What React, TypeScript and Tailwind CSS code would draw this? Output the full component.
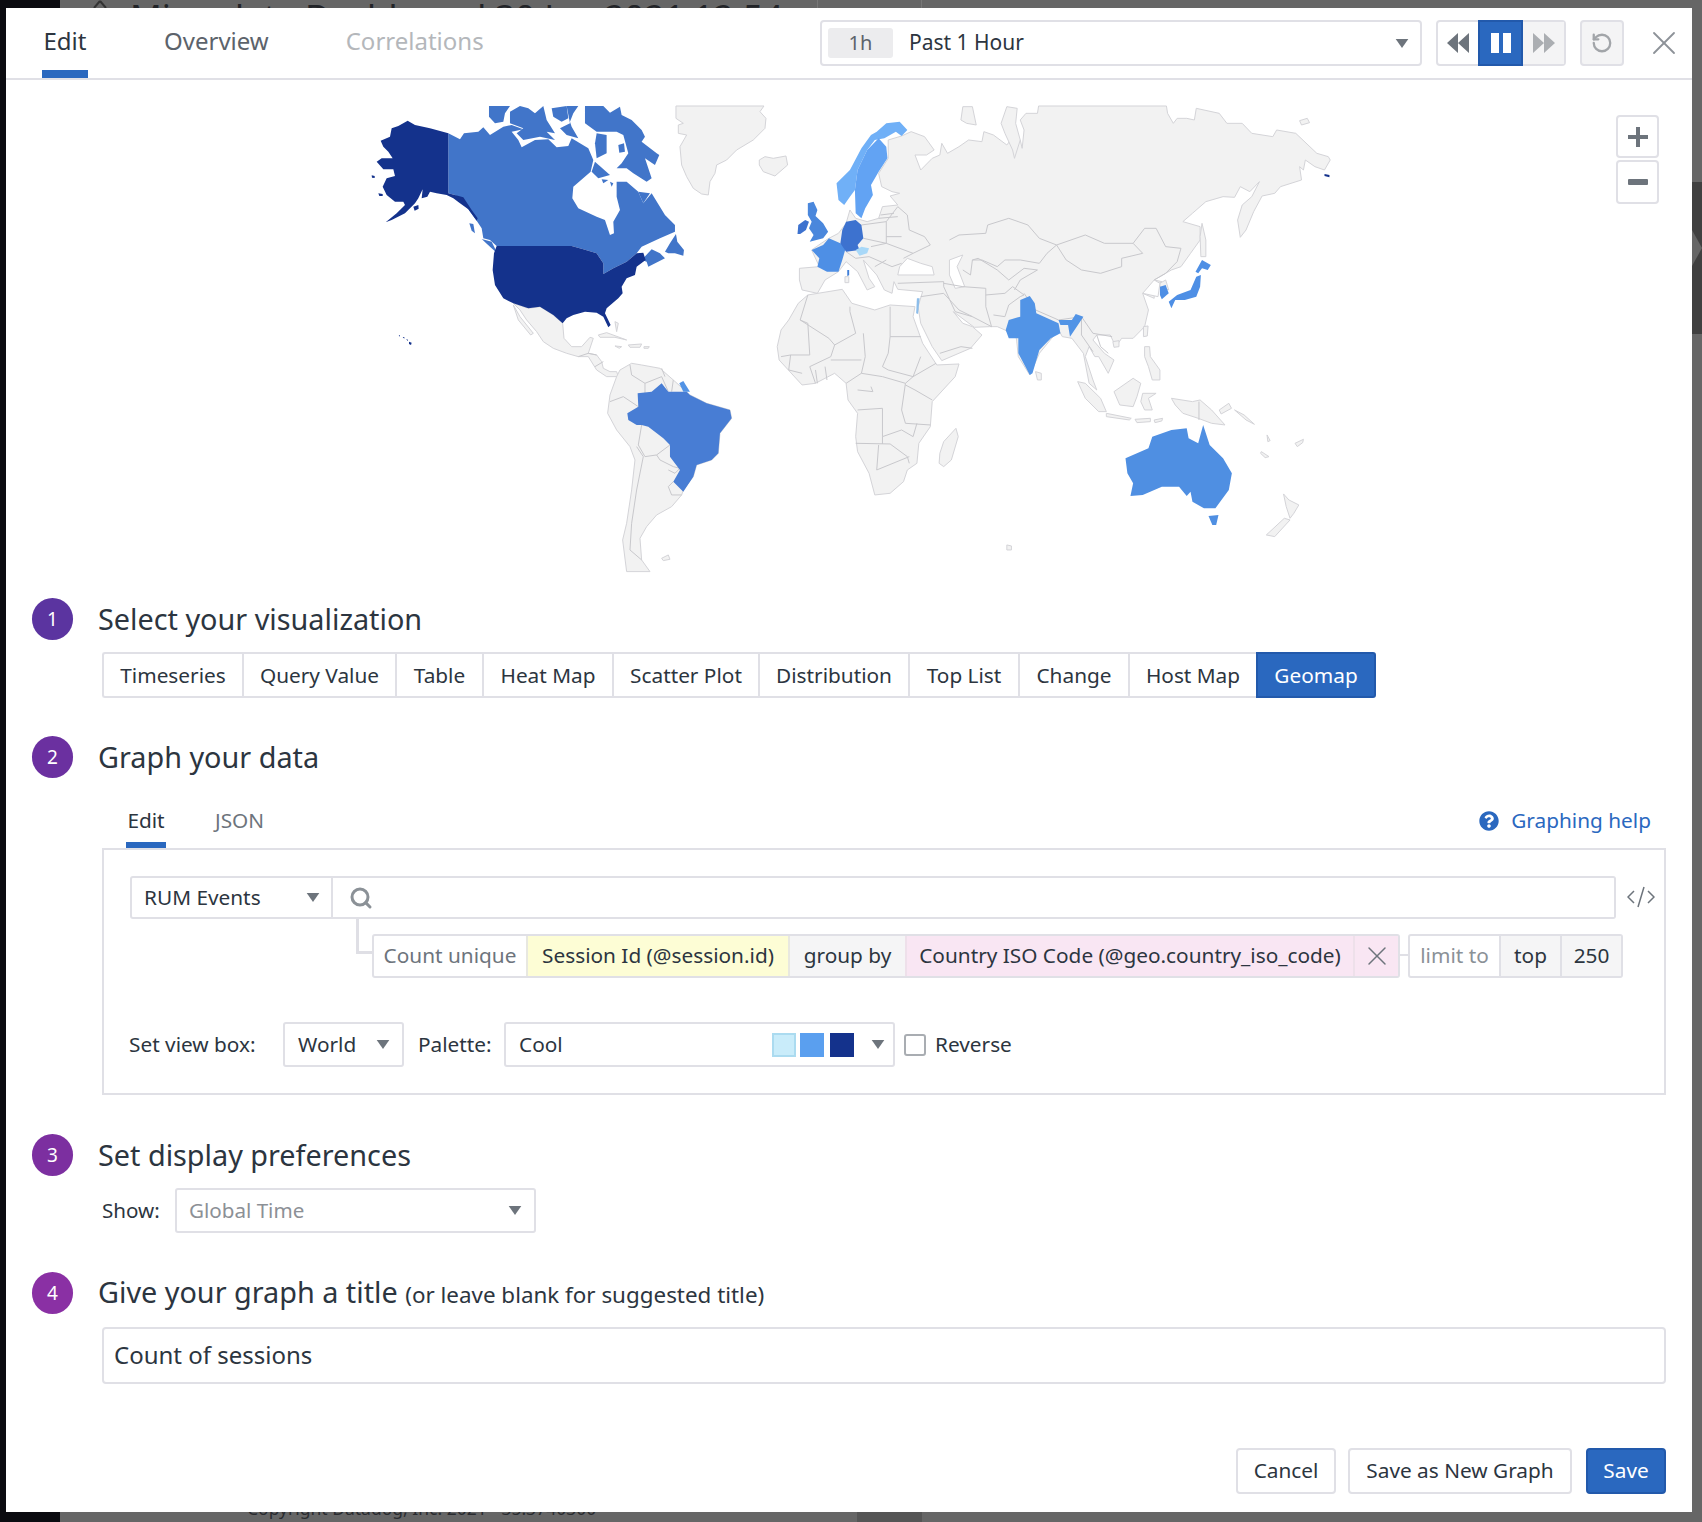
import { Search, RotateCcw, X } from 'lucide-react';
import { FaQuestionCircle } from 'react-icons/fa';

const LAND = '#f2f2f2';
const EDGE = '#d4d4d8';
const BORDER = '#c8c8cc';

// traced from the left half of the map
const americasGray = [
  '1008,48 1272,48 1260,65 1278,85 1275,115 1240,150 1190,180 1160,210 1130,225 1125,250 1110,275 1105,315 1085,312 1060,295 1040,260 1025,225 1020,170 1040,135 1015,130 1015,105 1030,100 1008,85',
  '1258,210 1275,200 1300,205 1338,198 1343,225 1305,258 1270,245 1258,225',
  '520,640 565,655 600,650 640,675 668,700 672,745 695,770 725,770 750,742 760,745 745,790 770,795 785,815 790,835 810,845 830,845 835,860 800,860 770,840 745,800 715,800 680,790 640,775 610,755 590,725 560,690 540,660',
  '520,645 540,680 580,730 572,735 535,690',
  '830,860 840,840 875,820 905,825 960,835 1000,870 1050,915 1100,940 1170,960 1175,985 1140,1030 1135,1090 1115,1110 1070,1125 1060,1160 1030,1200 1025,1215 995,1250 950,1275 920,1310 900,1345 905,1410 930,1445 860,1445 848,1350 860,1300 875,1200 885,1110 870,1070 830,1020 803,970 810,915',
  '775,735 800,728 860,750 825,742 780,742',
  '865,765 905,762 900,772 870,772',
  '825,768 845,770 838,775',
  '912,770 928,770 925,775 912,775',
  '825,695 835,700 830,725',
  '965,1405 985,1395 990,1408 970,1412',
];

const americasBorders = [
  '870,825 875,855 915,880 915,910',
  '915,880 965,860 985,905',
  '965,835 975,860',
  '1000,870 995,905',
  '810,935 850,920 895,950',
  '905,1005 895,1065 915,1100',
  '890,1070 910,1100 890,1200 875,1300 870,1380 905,1410',
  '915,1100 950,1095 990,1065',
  '950,1095 960,1110 1000,1130 1020,1135 1005,1150 985,1140',
  '1000,1175 985,1190 995,1215 1025,1215',
  '715,800 745,790 770,795',
  '765,830 790,815',
];

const canada = [
  '325,130 360,148 372,130 415,125 430,112 450,135 490,110 515,105 550,118 515,125 535,150 545,172 585,150 625,148 650,172 685,168 695,145 745,175 760,210 752,245 700,290 697,325 715,355 770,380 795,390 810,435 822,430 820,395 840,360 830,320 830,275 860,275 895,305 910,340 935,310 975,375 1005,405 1005,425 960,445 905,470 890,490 860,515 820,535 790,552 790,520 770,490 730,478 695,468 470,468 450,450 430,445 425,415 410,392 385,358 360,325 345,315 325,310',
  '975,485 990,460 1008,432 1012,455 1032,480 1030,497 1005,490 985,490',
  '905,510 935,478 960,490 975,505 925,530 920,515',
  '388,400 400,402 405,430 395,422',
  '425,447 455,455 472,490 450,470',
  '447,48 510,48 495,70 490,95 465,100 447,80',
  '510,65 540,48 565,55 585,70 610,48 620,90 645,130 620,125 645,150 600,140 550,150 530,130 550,115 510,100',
  '635,55 680,48 685,85 665,95 640,80',
  '680,48 715,48 700,70 690,95 695,110 715,145 680,135 660,115 690,100',
  '735,48 790,48 810,68 840,50 845,75 875,90 905,120 915,140 905,155 950,190 958,195 945,225 915,205 925,235 935,265 920,275 880,250 860,235 830,235 845,220 865,190 850,135 830,125 770,125 735,100',
  '770,130 800,135 800,190 770,205 765,160',
  '765,215 810,255 775,265 755,245',
  '785,268 805,270 790,280',
  '810,275 820,280 815,290',
  '835,165 852,160 855,185 838,188',
  '895,305 930,310 910,340',
];

const usa = [
  '470,468 695,468 730,478 770,490 790,520 790,552 820,535 860,515 890,490 910,488 917,510 890,530 885,555 860,565 845,590 848,610 835,625 800,655 795,670 812,705 805,712 790,680 770,668 735,665 700,675 680,685 668,700 640,675 600,650 565,655 520,640 490,625 465,585 458,540 462,490',
  '122,152 150,140 155,115 175,108 203,92 225,105 270,115 325,130 325,310 345,315 370,322 395,360 413,385 410,392 385,358 360,340 340,325 320,315 290,310 270,305 262,320 245,325 248,298 235,325 225,340 195,370 155,390 137,397 170,370 195,345 190,335 165,335 140,315 128,290 140,265 165,258 160,238 130,238 110,215 125,205 158,205 145,185 130,170',
  '95,256 104,258 104,264 96,263',
  '115,310 128,312 128,318 118,318',
  '220,350 235,345 236,356 224,362',
  '176,736 180,736 180,740',
  '188,741 193,741 193,746',
  '198,748 204,749 204,753',
  '207,755 215,758 213,765 207,762',
];

const brazil = '893,910 935,905 965,880 985,905 1040,905 1050,915 1100,940 1170,960 1175,985 1140,1030 1135,1090 1115,1110 1070,1125 1060,1160 1030,1205 1000,1175 1020,1140 990,1100 990,1065 970,1045 925,1010 905,1005 890,1005 865,990 862,970 895,950';

// traced from the right half of the map
const eurasiaGray = [
  '370,138 395,125 430,140 455,180 435,195 405,195 420,240 450,205 470,195 475,160 490,190 520,170 545,150 580,155 585,125 610,135 645,165 655,150 680,150 685,175 690,120 680,90 695,70 725,70 728,48 1062,48 1065,70 1080,100 1090,85 1115,85 1135,90 1140,55 1200,70 1220,100 1260,100 1285,130 1340,140 1350,120 1400,130 1455,190 1485,200 1490,210 1475,240 1450,230 1425,210 1420,240 1410,230 1415,270 1360,290 1345,310 1312,318 1290,365 1270,420 1255,442 1248,390 1260,345 1285,320 1305,275 1280,305 1255,290 1240,322 1210,320 1165,335 1130,370 1105,395 1150,410 1150,450 1125,490 1100,530 1075,540 1030,570 1050,575 1030,590 1030,625 1000,610 1015,660 1005,710 975,745 945,745 930,770 915,735 880,735 870,750 900,790 925,810 910,850 885,800 875,800 860,770 850,800 870,870 880,900 860,880 845,790 815,745 790,740 780,720 730,790 705,855 675,800 670,745 640,720 620,710 600,710 560,712 505,665 530,700 555,710 580,735 550,775 475,812 450,770 420,700 413,650 425,605 360,598 350,575 345,610 325,600 305,555 270,510 285,565 300,590 280,600 255,545 225,515 205,545 170,570 150,610 110,600 103,570 103,535 155,530 135,480 160,460 180,445 205,430 225,400 235,360 250,385 280,395 310,385 320,350 360,345 340,318 365,310 345,305 318,290 310,250 335,205 335,150',
  '100,640 125,615 215,598 240,640 300,660 340,645 405,650 400,680 425,760 462,825 520,822 510,860 450,935 445,1010 415,1060 410,1120 385,1140 375,1175 340,1210 300,1215 285,1150 255,1085 250,1040 255,970 230,930 225,880 195,850 145,880 110,885 50,810 45,770 55,720 75,690',
  '470,1090 480,1055 512,1015 518,1040 500,1110 480,1130 468,1120',
  '645,50 672,55 668,100 680,150 665,205 660,180 640,130 630,100',
  '525,90 530,50 555,50 565,105 540,100',
  '1410,92 1430,85 1436,98 1415,105',
  '1155,400 1165,450 1165,500 1152,500 1150,440',
  '720,845 735,850 735,870 725,870',
  '1002,710 1014,708 1012,738 1002,740',
  '922,755 938,752 938,770 925,772',
  '1005,770 1018,770 1020,800 1045,840 1045,870 1025,870 1015,830 1005,800',
  '925,905 975,865 995,880 985,920 975,950 940,945',
  '1000,910 1035,910 1015,925 1025,960 1005,960 995,935',
  '830,875 850,880 890,925 905,965 885,965 850,925',
  '905,970 970,985 965,990 905,980',
  '980,988 1020,985 1020,995 985,998',
  '1030,990 1052,985 1050,993 1032,998',
  '1075,925 1130,935 1150,930 1180,960 1215,1005 1180,1000 1145,985 1105,970 1085,945',
  '1200,960 1225,940 1232,955 1205,972',
  '1240,960 1265,975 1292,1003 1270,990',
  '1325,1035 1333,1052 1327,1055',
  '1398,1060 1420,1048 1418,1058 1404,1070',
  '1310,1085 1330,1100 1320,1103 1308,1090',
  '1368,1212 1382,1230 1408,1245 1395,1270 1385,1285 1375,1250',
  '1323,1335 1370,1285 1385,1290 1345,1340',
  '645,1365 657,1368 657,1380 645,1380',
  '222,560 232,560 232,578 222,578',
  '1045,580 1060,570 1068,600 1045,590',
];

const eurasiaHoles = [
  '365,530 385,505 420,520 450,530 455,555 360,555',
  '495,510 530,495 515,530 535,590 510,595 495,555',
  '1000,610 1030,570 1045,580 1040,620',
];

const eurasiaBorders = [
  '125,615 105,690 125,700 130,795 80,795',
  '105,690 180,745 195,765 250,730',
  '235,650 235,665 250,730',
  '340,650 340,740 420,740',
  '270,730 275,800 265,850',
  '340,740 335,790 320,830 335,840',
  '195,765 185,800 130,830 145,880',
  '185,810 265,810',
  '225,880 265,850 320,860 380,880 400,860 420,800',
  '380,880 370,960 380,1000 445,1005',
  '255,960 320,955 320,1040 370,1020 400,1040 410,1000',
  '250,1060 340,1062 385,1100 390,1120',
  '310,1065 305,1140 390,1100',
  '450,930 405,900 380,885',
  '335,840 400,860 460,820',
  '255,900 295,905 290,890',
  '320,1040 320,1062',
  '55,800 80,795 75,840 110,850',
  '145,840 150,880',
  '170,830 175,870',
  '775,465 850,435 900,460 975,460 1000,490 945,505 945,530 890,550 840,540 800,510 775,465',
  '975,460 1005,415 1035,415 1060,470 1100,475 1090,515 1060,550 1030,570',
  '495,450 520,435 590,430 595,405 650,385 700,405 730,445 775,465 750,490 730,520 680,510 640,510 620,530 580,510 555,510 550,555 530,540',
  '555,510 570,505 620,540 650,570 690,535 725,540 680,570 665,600',
  '480,580 530,590 590,595 590,650 605,710 555,680 510,665 480,590',
  '590,615 640,610 660,590 690,615 680,620 650,645 640,680 610,675',
  '690,610 720,660 780,690 840,680 870,730 920,740',
  '840,680 840,735 870,785',
  '880,735 890,770 910,790',
  '360,580 480,575 480,590',
  '420,620 480,610 520,660 555,680',
  '470,790 525,770 555,775',
  '265,405 330,395 330,460 270,445',
  '330,395 360,350 385,375 390,420 430,440 445,465 400,490',
  '290,470 330,460 400,490 375,505',
  '285,500 345,530 370,520',
  '330,510 300,530',
  '350,370 315,375',
  '310,385 360,380',
  '225,485 250,505 285,500',
  '370,440 330,440',
];

const countries: { fill: string; points: string }[] = [
  { fill: '#4e8fe5', points: '135,480 165,465 180,445 210,460 225,470 215,510 205,545 175,545 150,530 155,505' },
  { fill: '#3d72cf', points: '225,395 250,390 265,405 270,445 255,465 260,480 225,485 210,460 215,420' },
  { fill: '#a8d8f8', points: '250,480 265,470 285,475 280,490 260,497' },
  { fill: '#4a87dc', points: '125,340 140,335 150,360 145,378 165,400 178,425 165,445 130,455 140,435 128,415 135,395 125,375' },
  { fill: '#3d72cf', points: '100,405 118,390 128,395 120,420 105,432 98,432' },
  { fill: '#70b0f7', points: '305,125 330,100 365,95 385,120 370,138 355,125 325,145 300,150 280,180 255,240 248,300 235,320 220,345 205,330 200,280 235,240 265,175 290,135' },
  { fill: '#62a3f3', points: '310,145 330,170 333,205 310,245 290,285 295,315 275,355 265,385 250,370 248,300 255,240 280,180' },
  { fill: '#4e8fe5', points: '1045,590 1060,585 1068,610 1050,628 1045,615' },
  { fill: '#4e8fe5', points: '1138,545 1155,510 1178,525 1170,540 1155,535 1145,550' },
  { fill: '#4e8fe5', points: '1140,560 1152,555 1150,590 1140,620 1110,630 1085,630 1075,655 1068,635 1090,615 1125,600' },
  { fill: '#5294e6', points: '650,690 680,680 680,630 705,618 718,640 722,670 780,700 785,730 760,745 730,780 712,850 705,855 675,790 675,745 650,745 642,720' },
  { fill: '#5294e6', points: '780,690 815,690 825,672 845,680 825,715 810,740 805,705 785,705' },
  { fill: '#4f8fe2', points: '955,1105 1015,1075 1025,1040 1075,1020 1115,1015 1120,1045 1145,1060 1158,1005 1175,1065 1210,1105 1233,1150 1225,1200 1190,1255 1160,1255 1130,1235 1125,1205 1115,1218 1095,1190 1050,1190 1000,1215 968,1218 975,1180 960,1150' },
  { fill: '#4f8fe2', points: '1172,1278 1198,1275 1192,1305 1182,1305' },
  { fill: '#8cbdea', points: '410,625 417,625 413,672 408,670' },
  { fill: '#3f7fd8', points: '228,540 233,540 233,556 228,558' },
  { fill: '#14328c', points: '1475,252 1488,255 1488,262 1475,258' },
];

function WorldMap() {
  return (
    <svg viewBox="6 80 1686 510" className="block w-[1686px] h-[510px]">
      <g transform="translate(340 90) scale(0.3333)">
        {americasGray.map((p) => (
          <polygon key={p} points={p} fill={LAND} stroke={EDGE} strokeWidth="1" vectorEffect="non-scaling-stroke" />
        ))}
        {americasBorders.map((p) => (
          <polyline key={p} points={p} fill="none" stroke={BORDER} strokeWidth="1" vectorEffect="non-scaling-stroke" />
        ))}
        {canada.map((p) => (
          <polygon key={p} points={p} fill="#4175c9" />
        ))}
        {usa.map((p) => (
          <polygon key={p} points={p} fill="#14328c" />
        ))}
        <polygon points={brazil} fill="#487dd4" />
        <polygon points="1018,880 1030,873 1050,905 1030,905" fill="#5293e5" />
      </g>
      <g transform="translate(760 90) scale(0.3827 0.3333)">
        {eurasiaGray.map((p) => (
          <polygon key={p} points={p} fill={LAND} stroke={EDGE} strokeWidth="1" vectorEffect="non-scaling-stroke" />
        ))}
        {eurasiaHoles.map((p) => (
          <polygon key={p} points={p} fill="#ffffff" stroke={EDGE} strokeWidth="1" vectorEffect="non-scaling-stroke" />
        ))}
        {eurasiaBorders.map((p) => (
          <polyline key={p} points={p} fill="none" stroke={BORDER} strokeWidth="1" vectorEffect="non-scaling-stroke" />
        ))}
        <line x1="1147" y1="935" x2="1147" y2="990" stroke={BORDER} strokeWidth="1" vectorEffect="non-scaling-stroke" />
        {countries.map((c) => (
          <polygon key={c.points} points={c.points} fill={c.fill} />
        ))}
      </g>
    </svg>
  );
}

const Caret = () => (
  <svg viewBox="0 0 14 10" className="w-[14px] h-[9px] shrink-0">
    <polygon points="0,0 14,0 7,10" fill="#6d747c" />
  </svg>
);

const vizTypes = [
  { name: 'Timeseries', w: 'w-[140px] rounded-l-[3px]' },
  { name: 'Query Value', w: 'w-[153px]' },
  { name: 'Table', w: 'w-[87px]' },
  { name: 'Heat Map', w: 'w-[130px]' },
  { name: 'Scatter Plot', w: 'w-[146px]' },
  { name: 'Distribution', w: 'w-[150px]' },
  { name: 'Top List', w: 'w-[110px]' },
  { name: 'Change', w: 'w-[110px]' },
  { name: 'Host Map', w: 'w-[128px]' },
];

const Step = ({ n, color, children }: { n: number; color: string; children: React.ReactNode }) => (
  <div className="flex items-center h-[42px]">
    <div className={`w-[41px] h-[42px] rounded-full flex items-center justify-center text-white text-[19px] shrink-0 ${color}`}>{n}</div>
    <div className="ml-[25px] text-[28.8px] leading-[42px] text-[#2c3540] whitespace-nowrap">{children}</div>
  </div>
);

export default function App() {
  return (
    <div className="relative w-[1702px] h-[1522px] overflow-hidden bg-[#666666] font-['Noto_Sans',sans-serif] text-[#2c3540]">
      {/* page behind the modal */}
      <div className="absolute left-0 top-0 w-[60px] h-[1522px] bg-[#0b0b10]" />
      <svg viewBox="0 0 24 8" className="absolute left-[88px] top-0 w-[24px] h-[8px]">
        <path d="M12 1L6 8M12 1l6 7" fill="none" stroke="#333333" strokeWidth="2" />
      </svg>
      <div className="absolute left-[130px] -top-[7px] text-[35px] leading-[48px] text-[#222428] whitespace-nowrap">Microdata Dashboard 30 Jan 2021 12:54</div>
      <div className="absolute left-[817px] top-0 w-[1px] h-[8px] bg-[#777777]" />
      <div className="absolute left-[921px] top-0 w-[1px] h-[8px] bg-[#777777]" />
      <div className="absolute left-[247px] top-[1496px] text-[17.5px] leading-[24px] text-[#2a2c30] whitespace-nowrap">Copyright Datadog, Inc. 2021 - 35.3740300</div>
      <div className="absolute left-[857px] top-[1512px] w-[65px] h-[10px] bg-[#555555]" />
      <div className="absolute left-[1692px] top-[182px] w-[10px] h-[152px] bg-[#404040]" />
      <svg viewBox="0 0 10 36" className="absolute left-[1692px] top-[230px] w-[10px] h-[36px]">
        <polygon points="0,0 10,18 0,36" fill="#666666" />
      </svg>

      {/* modal */}
      <div className="absolute left-[6px] top-[8px] w-[1686px] h-[1504px] bg-white">
        <div className="flex items-center h-[72px] border-b-2 border-[#e0e0e6]">
          <div className="relative ml-[36px] w-[46px] h-[70px] flex items-center justify-center pb-[4px] text-[24px] text-[#2c3540]">
            Edit
            <div className="absolute left-0 bottom-0 w-[46px] h-[8px] bg-[#2a68bf]" />
          </div>
          <div className="ml-[76px] pb-[4px] text-[24px] text-[#5c636b]">Overview</div>
          <div className="ml-[77px] pb-[4px] text-[24px] text-[#b4b7bb]">Correlations</div>

          <div className="flex items-center ml-auto w-[602px] h-[46px] border-2 border-[#e0e0e6] rounded-[4px] pl-[6px] pr-[11px]">
            <div className="w-[65px] h-[30px] rounded-[3px] bg-[#ececee] flex items-center justify-center text-[20px] text-[#5c636b]">1h</div>
            <div className="ml-[16px] text-[21px] text-[#2c3540]">Past 1 Hour</div>
            <div className="ml-auto"><Caret /></div>
          </div>
          <div className="flex ml-[14px] w-[130px] h-[46px] border-2 border-[#e0e0e6] rounded-[4px]">
            <div className="w-[40px] flex items-center justify-center">
              <svg viewBox="0 0 22 20" className="w-[22px] h-[20px]"><path d="M11 0v20L0 10zM22 0v20L11 10z" fill="#6d747c" /></svg>
            </div>
            <div className="-my-[2px] w-[45px] bg-[#2a68bf] border-2 border-[#2259ab] flex items-center justify-center">
              <svg viewBox="0 0 20 20" className="w-[20px] h-[20px]"><path d="M0 0h8v20H0zM12 0h8v20h-8z" fill="#ffffff" /></svg>
            </div>
            <div className="flex-1 bg-[#f4f4f5] flex items-center justify-center">
              <svg viewBox="0 0 22 20" className="w-[22px] h-[20px]"><path d="M0 0l11 10L0 20zM11 0l11 10-11 10z" fill="#abaeb2" /></svg>
            </div>
          </div>
          <div className="ml-[14px] w-[44px] h-[46px] border-2 border-[#e0e0e6] rounded-[4px] bg-[#f4f4f5] flex items-center justify-center">
            <RotateCcw className="w-[22px] h-[22px] text-[#a2a5a9]" strokeWidth={2.5} />
          </div>
          <X className="ml-[20px] mr-[8px] w-[40px] h-[40px] text-[#8d9298]" strokeWidth={1.1} />
        </div>

        <div className="relative">
          <WorldMap />
          <div className="absolute left-[1610px] top-[35px] flex flex-col gap-[2px]">
            <div className="w-[43px] h-[43px] border-2 border-[#e0e0e6] rounded-[4px] flex items-center justify-center">
              <svg viewBox="0 0 20 20" className="w-[20px] h-[20px]"><path d="M8 0h4v8h8v4h-8v8H8v-8H0V8h8z" fill="#6d747c" /></svg>
            </div>
            <div className="w-[43px] h-[44px] border-2 border-[#e0e0e6] rounded-[4px] flex items-center justify-center">
              <svg viewBox="0 0 20 6" className="w-[20px] h-[6px]"><rect width="20" height="6" rx="1" fill="#6d747c" /></svg>
            </div>
          </div>
        </div>

        <div className="pl-[26px] pt-[8px]">
          <Step n={1} color="bg-[#5b34a0]">Select your visualization</Step>

          <div className="flex ml-[70px] mt-[12px] h-[46px] text-[20.8px]">
            {vizTypes.map((v) => (
              <div key={v.name} className={`${v.w} flex items-center justify-center pt-[2px] border-2 border-r-0 border-[#e0e0e6]`}>{v.name}</div>
            ))}
            <div className="w-[120px] flex items-center justify-center pt-[2px] bg-[#2a68bf] border-2 border-[#2259ab] rounded-r-[3px] text-white">Geomap</div>
          </div>

          <div className="mt-[38px]">
            <Step n={2} color="bg-[#6b30a0]">Graph your data</Step>
          </div>

          <div className="relative ml-[70px] mt-[20px] w-[1564px]">
            <div className="flex items-start h-[50px] pl-[24px] text-[20.8px]">
              <div className="relative w-[40px] h-[50px] flex items-center justify-center pb-[4px]">
                Edit
                <div className="absolute left-0 bottom-0 w-[40px] h-[6px] bg-[#2a68bf]" />
              </div>
              <div className="ml-[49px] h-[46px] flex items-center text-[#6d747c]">JSON</div>
              <div className="ml-auto mr-[15px] h-[46px] flex items-center text-[#2a68bf]">
                <FaQuestionCircle className="w-[20px] h-[20px] mr-[12px]" />
                Graphing help
              </div>
            </div>

            <div className="h-[247px] border-2 border-[#e0e0e6] px-[26px] pt-[26px]">
              <div className="relative flex w-[1486px] h-[43px]">
                <div className="flex items-center w-[203px] border-2 border-[#e0e0e6] rounded-l-[3px] pl-[12px] pr-[11px] text-[20.8px]">
                  RUM Events
                  <div className="ml-auto"><Caret /></div>
                </div>
                <div className="flex items-center flex-1 border-2 border-l-0 border-[#e0e0e6] rounded-r-[3px] pl-[16px]">
                  <Search className="w-[24px] h-[24px] text-[#8b9197]" strokeWidth={3} />
                </div>
                <svg viewBox="0 0 28 24" className="absolute left-[1497px] top-[9px] w-[28px] h-[24px]">
                  <path d="M7 6L1 12l6 6M21 6l6 6-6 6M17 2l-6 20" fill="none" stroke="#6d747c" strokeWidth="1.5" />
                </svg>
                {/* elbow between the search bar and the aggregation row */}
                <div className="absolute left-[226px] top-[43px] w-[16px] h-[35px] border-l-[3px] border-b-[3px] border-[#dfdfe5]" />
              </div>

              <div className="flex ml-[242px] mt-[15px] h-[44px] text-[20.8px] whitespace-nowrap">
                <div className="flex border-2 border-[#e0e0e6] rounded-[3px]">
                  <div className="w-[152px] flex items-center justify-center text-[#6d747c]">Count unique</div>
                  <div className="w-[264px] flex items-center justify-center bg-[#fdfdd5] border-x-2 border-[#e8e8e0]">Session Id (@session.id)</div>
                  <div className="w-[115px] flex items-center justify-center bg-[#f5f5f6]">group by</div>
                  <div className="w-[450px] flex items-center justify-center bg-[#f9e6f3] border-x-2 border-[#eee0ea]">Country ISO Code (@geo.country_iso_code)</div>
                  <div className="w-[43px] flex items-center justify-center bg-[#f9e6f3]">
                    <X className="w-[32px] h-[32px] text-[#6d747c]" strokeWidth={1.1} />
                  </div>
                </div>
                <div className="w-[8px] h-[2px] mt-[20px] bg-[#e0e0e6]" />
                <div className="flex border-2 border-[#e0e0e6] rounded-[3px]">
                  <div className="w-[89px] flex items-center justify-center text-[#8b9197]">limit to</div>
                  <div className="w-[61px] flex items-center justify-center bg-[#f5f5f6] border-l-2 border-[#e0e0e6]">top</div>
                  <div className="w-[61px] flex items-center justify-center bg-[#f5f5f6] border-l-2 border-[#e0e0e6]">250</div>
                </div>
              </div>

              <div className="flex items-center mt-[44px] h-[45px] text-[20.8px] whitespace-nowrap">
                <span className="-ml-[1px] w-[154px]">Set view box:</span>
                <div className="flex items-center w-[121px] h-[45px] border-2 border-[#e0e0e6] rounded-[3px] pl-[13px] pr-[12px]">
                  World
                  <div className="ml-auto"><Caret /></div>
                </div>
                <span className="ml-[14px] w-[86px]">Palette:</span>
                <div className="flex items-center w-[391px] h-[45px] border-2 border-[#e0e0e6] rounded-[3px] pl-[13px] pr-[8px]">
                  Cool
                  <div className="ml-auto flex items-center">
                    <div className="w-[24px] h-[24px] bg-[#c9ecfa] border-2 border-[#abdbf0]" />
                    <div className="ml-[4px] w-[24px] h-[24px] bg-[#5a9fef]" />
                    <div className="ml-[6px] w-[24px] h-[24px] bg-[#14328c]" />
                    <div className="ml-[17px]"><Caret /></div>
                  </div>
                </div>
                <div className="ml-[9px] w-[22px] h-[22px] border-2 border-[#a9adb2] rounded-[3px]" />
                <span className="ml-[9px]">Reverse</span>
              </div>
            </div>
          </div>

          <div className="mt-[39px]">
            <Step n={3} color="bg-[#7c2fa0]">Set display preferences</Step>
          </div>
          <div className="flex items-center ml-[70px] mt-[12px] h-[45px] text-[20.6px]">
            <span className="w-[73px]">Show:</span>
            <div className="flex items-center w-[361px] h-[45px] border-2 border-[#e0e0e6] rounded-[3px] pl-[12px] pr-[12px] text-[#8c9096]">
              Global Time
              <div className="ml-auto"><Caret /></div>
            </div>
          </div>

          <div className="mt-[39px]">
            <Step n={4} color="bg-[#8a30a4]">
              Give your graph a title <span className="text-[22.4px]">(or leave blank for suggested title)</span>
            </Step>
          </div>
          <div className="flex items-center ml-[70px] mt-[13px] pb-[2px] w-[1564px] h-[57px] border-2 border-[#e0e0e6] rounded-[4px] pl-[10px] text-[24px]">
            Count of sessions
          </div>

          <div className="flex justify-end w-[1634px] mt-[64px] gap-[12px] h-[46px] text-[20.8px]">
            <div className="w-[100px] flex items-center justify-center pb-[1px] border-2 border-[#e0e0e6] rounded-[4px]">Cancel</div>
            <div className="w-[224px] flex items-center justify-center pb-[1px] border-2 border-[#e0e0e6] rounded-[4px]">Save as New Graph</div>
            <div className="ml-[2px] w-[80px] flex items-center justify-center pb-[1px] bg-[#2a68bf] border-2 border-[#2259ab] rounded-[4px] text-white">Save</div>
          </div>
        </div>
      </div>
    </div>
  );
}
